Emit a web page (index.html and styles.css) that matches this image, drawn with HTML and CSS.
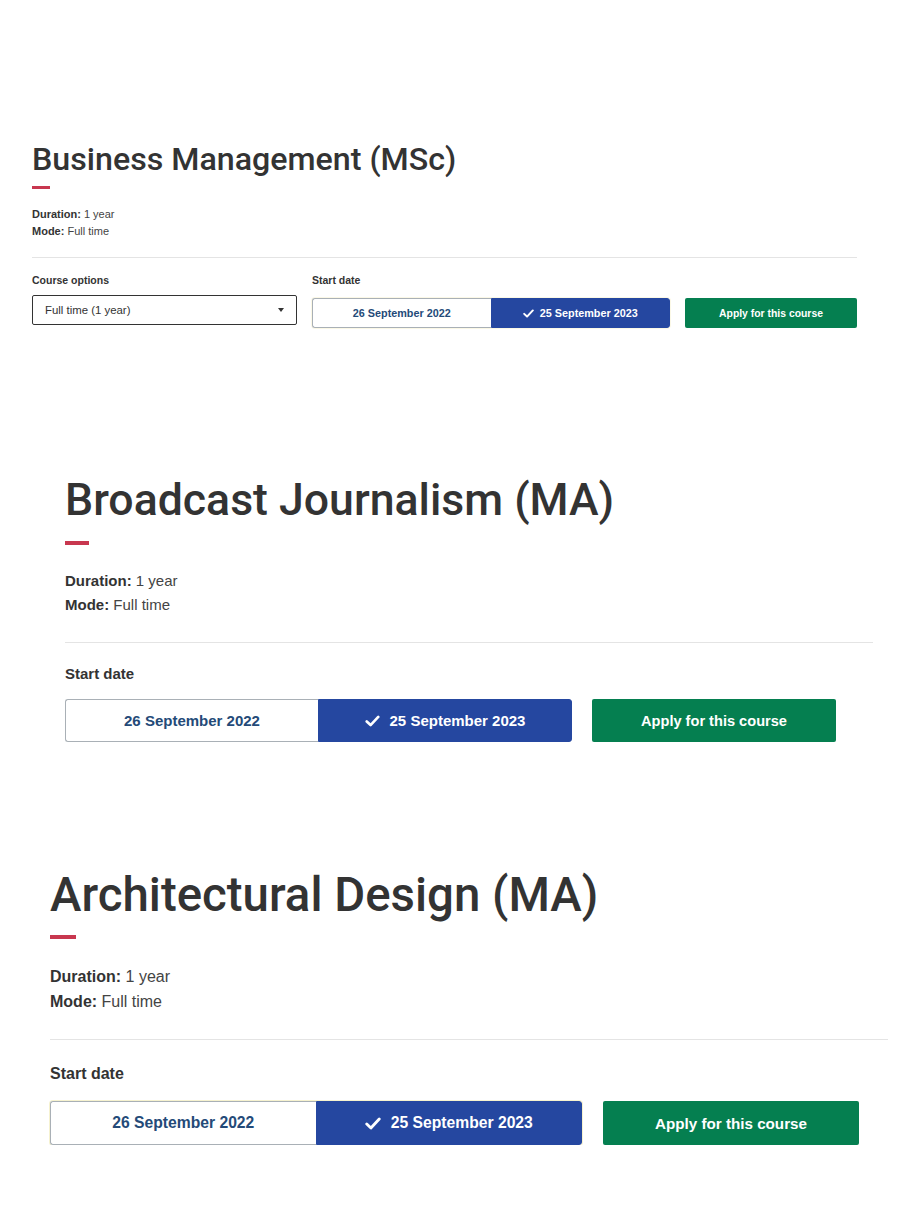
FILE: index.html
```html
<!DOCTYPE html>
<html lang="en">
<head>
<meta charset="utf-8">
<title>Courses</title>
<link rel="stylesheet" href="styles.css">
</head>
<body>
<main class="page">
  <section class="course course--one">
    <h1 class="course__title">Business Management (MSc)</h1>
    <span class="course__rule"></span>
    <div class="course__meta">
      <p><strong>Duration:</strong> 1 year</p>
      <p><strong>Mode:</strong> Full time</p>
    </div>
    <hr class="course__divider">
    <div class="course__controls">
      <div class="field field--options">
        <span class="field__label">Course options</span>
        <div class="select">
          <span>Full time (1 year)</span>
          <span class="select__caret"></span>
        </div>
      </div>
      <div class="field field--dates">
        <span class="field__label">Start date</span>
        <div class="toggle">
          <button class="toggle__btn">26 September 2022</button>
          <button class="toggle__btn toggle__btn--on"><svg class="check" viewBox="0 0 12 10"><path d="M1.2 5.4 L4.4 8.4 L10.8 1.6" fill="none" stroke="currentColor" stroke-width="2.2" stroke-linecap="round" stroke-linejoin="round"/></svg>25 September 2023</button>
        </div>
      </div>
      <a class="apply" href="#">Apply for this course</a>
    </div>
  </section>

  <section class="course course--two">
    <h1 class="course__title">Broadcast Journalism (MA)</h1>
    <span class="course__rule"></span>
    <div class="course__meta">
      <p><strong>Duration:</strong> 1 year</p>
      <p><strong>Mode:</strong> Full time</p>
    </div>
    <hr class="course__divider">
    <div class="field__label">Start date</div>
    <div class="course__controls">
      <div class="toggle">
        <button class="toggle__btn">26 September 2022</button>
        <button class="toggle__btn toggle__btn--on"><svg class="check" viewBox="0 0 12 10"><path d="M1.2 5.4 L4.4 8.4 L10.8 1.6" fill="none" stroke="currentColor" stroke-width="2.2" stroke-linecap="round" stroke-linejoin="round"/></svg>25 September 2023</button>
      </div>
      <a class="apply" href="#">Apply for this course</a>
    </div>
  </section>

  <section class="course course--three">
    <h1 class="course__title">Architectural Design (MA)</h1>
    <span class="course__rule"></span>
    <div class="course__meta">
      <p><strong>Duration:</strong> 1 year</p>
      <p><strong>Mode:</strong> Full time</p>
    </div>
    <hr class="course__divider">
    <div class="field__label">Start date</div>
    <div class="course__controls">
      <div class="toggle">
        <button class="toggle__btn">26 September 2022</button>
        <button class="toggle__btn toggle__btn--on"><svg class="check" viewBox="0 0 12 10"><path d="M1.2 5.4 L4.4 8.4 L10.8 1.6" fill="none" stroke="currentColor" stroke-width="2.2" stroke-linecap="round" stroke-linejoin="round"/></svg>25 September 2023</button>
      </div>
      <a class="apply" href="#">Apply for this course</a>
    </div>
  </section>
</main>
</body>
</html>
```

FILE: styles.css
```css
* { box-sizing: border-box; }

html, body {
  margin: 0;
  padding: 0;
  background: #ffffff;
}

body {
  font-family: "Liberation Sans", Arial, sans-serif;
  color: #333333;
}

.page {
  display: flex;
  flex-direction: column;
}

.course {
  display: flex;
  flex-direction: column;
  align-items: flex-start;
}

.course__title {
  margin: 0;
  font-family: Roboto, "Liberation Sans", Arial, sans-serif;
  font-weight: 500;
  color: #333333;
  line-height: 1.2;
  white-space: nowrap;
}

.course__rule {
  display: block;
  background: #c8374f;
}

.course__meta p { margin: 0; }
.course__meta strong { font-weight: 700; color: #333; }
.course__meta { color: #444; }

.course__divider {
  align-self: stretch;
  border: 0;
  height: 1px;
  background: #e4e4e4;
  margin: 0;
}

.course__controls {
  display: flex;
  align-items: flex-start;
}

.field {
  display: flex;
  flex-direction: column;
}

.field__label {
  font-weight: 700;
  color: #333333;
}

.select {
  display: flex;
  align-items: center;
  justify-content: space-between;
  border: 1.5px solid #333;
  border-radius: 2px;
  color: #333;
}

.select__caret {
  width: 0;
  height: 0;
  border-left: 3.5px solid transparent;
  border-right: 3.5px solid transparent;
  border-top: 4px solid #333;
}

.toggle {
  display: flex;
  border-radius: 3px;
}

.toggle__btn {
  flex: 1 1 0;
  display: flex;
  align-items: center;
  justify-content: center;
  font-family: inherit;
  font-weight: 700;
  color: #244a78;
  background: #ffffff;
  border: 1px solid #a9b0b6;
  border-right: 0;
  border-radius: 3px 0 0 3px;
  margin: 0;
  padding: 0;
  cursor: pointer;
}

.toggle__btn--on {
  background: #2547a0;
  color: #ffffff;
  border: 1px solid #2547a0;
  border-radius: 0 3px 3px 0;
}

.check { display: block; }

.apply {
  display: flex;
  align-items: center;
  justify-content: center;
  background: #057f50;
  color: #ffffff;
  font-weight: 700;
  text-decoration: none;
  border-radius: 2px;
}

/* ---------- Section 1 (small scale) ---------- */
.course--one {
  margin: 140px 0 0 32px;
  width: 825px;
}
.course--one .course__title { font-size: 32.2px; line-height: 38px; }
.course--one .course__rule { width: 18px; height: 3px; margin-top: 8px; }
.course--one .course__meta { margin-top: 17px; font-size: 11px; line-height: 17px; }
.course--one .course__divider { margin-top: 17px; }
.course--one .course__controls { margin-top: 15px; }
.course--one .field__label { font-size: 10.5px; line-height: 14px; }
.course--one .field--options { width: 265px; }
.course--one .select { margin-top: 8px; height: 30px; padding: 0 12px 0 12px; font-size: 11.4px; }
.course--one .field--dates { margin-left: 15px; }
.course--one .field--dates .toggle { margin-top: 11px; width: 358px; height: 30px; box-shadow: 0 0 0 1px #fbf8e6; }
.course--one .toggle__btn { font-size: 10.8px; }
.course--one .check { width: 11px; height: 9px; margin-right: 6px; }
.course--one .apply { margin: 25px 0 0 15px; width: 172px; height: 30px; font-size: 10.4px; }

/* ---------- Section 2 ---------- */
.course--two {
  margin: 145px 0 0 65px;
  width: 808px;
}
.course--two .course__title { font-size: 44.6px; line-height: 54px; }
.course--two .course__rule { width: 24px; height: 4px; margin-top: 14px; }
.course--two .course__meta { margin-top: 24px; font-size: 15px; line-height: 24px; }
.course--two .course__divider { margin-top: 25px; }
.course--two .field__label { margin-top: 21px; font-size: 15px; line-height: 20px; }
.course--two .course__controls { margin-top: 15px; }
.course--two .toggle { width: 507px; height: 43px; }
.course--two .toggle__btn { font-size: 15px; }
.course--two .check { width: 15px; height: 12px; margin-right: 10px; }
.course--two .apply { margin-left: 20px; width: 244px; height: 43px; font-size: 14.6px; }

/* ---------- Section 3 ---------- */
.course--three {
  margin: 124px 0 0 50px;
  width: 838px;
}
.course--three .course__title { font-size: 47.4px; line-height: 58px; }
.course--three .course__rule { width: 26px; height: 4px; margin-top: 11px; }
.course--three .course__meta { margin-top: 25px; font-size: 16px; line-height: 25px; }
.course--three .course__divider { margin-top: 25px; }
.course--three .field__label { margin-top: 23px; font-size: 16px; line-height: 21px; }
.course--three .course__controls { margin-top: 17px; }
.course--three .toggle { width: 532px; height: 44px; box-shadow: 0 0 0 1px #f6f2cf; }
.course--three .toggle__btn { font-size: 15.7px; }
.course--three .check { width: 16px; height: 13px; margin-right: 10px; }
.course--three .apply { margin-left: 21px; width: 256px; height: 44px; font-size: 15.2px; }
```
